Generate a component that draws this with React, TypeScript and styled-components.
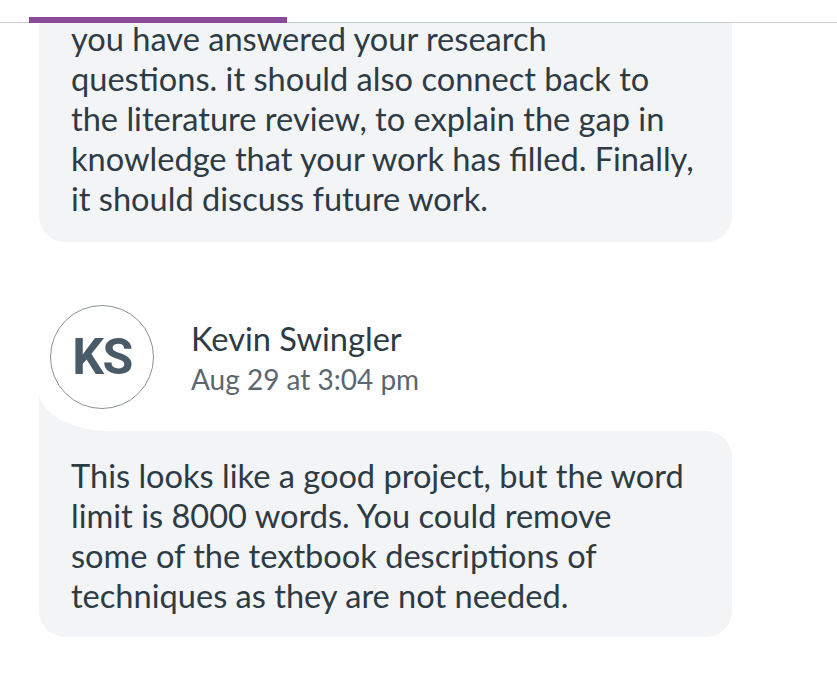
import React from "react";
import styled, { createGlobalStyle } from "styled-components";

const Global = createGlobalStyle`
  html, body { margin: 0; padding: 0; background: #ffffff; }
  body { font-family: Lato, "Noto Sans", sans-serif; color: #2d3b45; }
`;

const Page = styled.div`
  width: 837px;
  height: 681px;
  overflow: hidden;
  display: flex;
  flex-direction: column;
  background: #ffffff;
`;

const TabBar = styled.div`
  height: 22px;
  flex: none;
  border-bottom: 1px solid #c7cdd1;
  display: flex;
  align-items: flex-end;
  padding-left: 29px;
`;

const TabIndicator = styled.div`
  width: 258px;
  height: 6px;
  margin-bottom: -1px;
  background: #8a4a97;
`;

const Feed = styled.div`
  flex: 1;
  overflow: hidden;
  padding: 0 105px 0 39px;
  display: flex;
  flex-direction: column;
`;

const Bubble = styled.div<{ $clipped?: boolean; $tail?: boolean }>`
  position: relative;
  background: #f3f4f5;
  border-radius: ${(p) => (p.$clipped ? "0 0 26px 26px" : p.$tail ? "0 26px 26px 26px" : "26px")};
  padding: ${(p) => (p.$clipped ? "0 36px 23px 32px" : "25px 36px 21px 32px")};
  margin-top: ${(p) => (p.$clipped ? "-4px" : "0")};
  font-size: 32.6px;
  line-height: 40px;
  color: #2d3b45;
  ${(p) =>
    p.$tail
      ? `
    &::before {
      content: "";
      position: absolute;
      left: 0;
      top: -38px;
      width: 70px;
      height: 38px;
      background: #f3f4f5;
    }
    &::after {
      content: "";
      position: absolute;
      left: 0;
      top: -40px;
      width: 70px;
      height: 40px;
      background: #ffffff;
      border-bottom-left-radius: 100% 100%;
    }
  `
      : ""}
`;

const Author = styled.div`
  display: flex;
  align-items: center;
  gap: 37px;
  margin: 63px 0 22px 11px;
  position: relative;
  z-index: 1;
`;

const Avatar = styled.div`
  width: 102px;
  height: 102px;
  border-radius: 50%;
  border: 1px solid #8b9297;
  background: #ffffff;
  display: flex;
  align-items: center;
  justify-content: center;
  font-family: Roboto, "Liberation Sans", sans-serif;
  font-weight: 700;
  font-size: 50px;
  color: #4a5b68;
  letter-spacing: -1.5px;
`;

const Meta = styled.div`
  display: flex;
  flex-direction: column;
  margin-top: 4px;
`;

const Name = styled.div`
  font-size: 32.6px;
  line-height: 40px;
  color: #2d3b45;
`;

const Date = styled.div`
  font-size: 28px;
  line-height: 40px;
  color: #5b6770;
`;

export default function App() {
  return (
    <Page>
      <Global />
      <TabBar>
        <TabIndicator />
      </TabBar>
      <Feed>
        <Bubble $clipped>
          you have answered your research questions. it should also connect back to the
          literature review, to explain the gap in knowledge that your work has filled.
          Finally, it should discuss future work.
        </Bubble>
        <Author>
          <Avatar>KS</Avatar>
          <Meta>
            <Name>Kevin Swingler</Name>
            <Date>Aug 29 at 3:04 pm</Date>
          </Meta>
        </Author>
        <Bubble $tail>
          This looks like a good project, but the word limit is 8000 words. You could
          remove some of the textbook descriptions of techniques as they are not needed.
        </Bubble>
      </Feed>
    </Page>
  );
}
